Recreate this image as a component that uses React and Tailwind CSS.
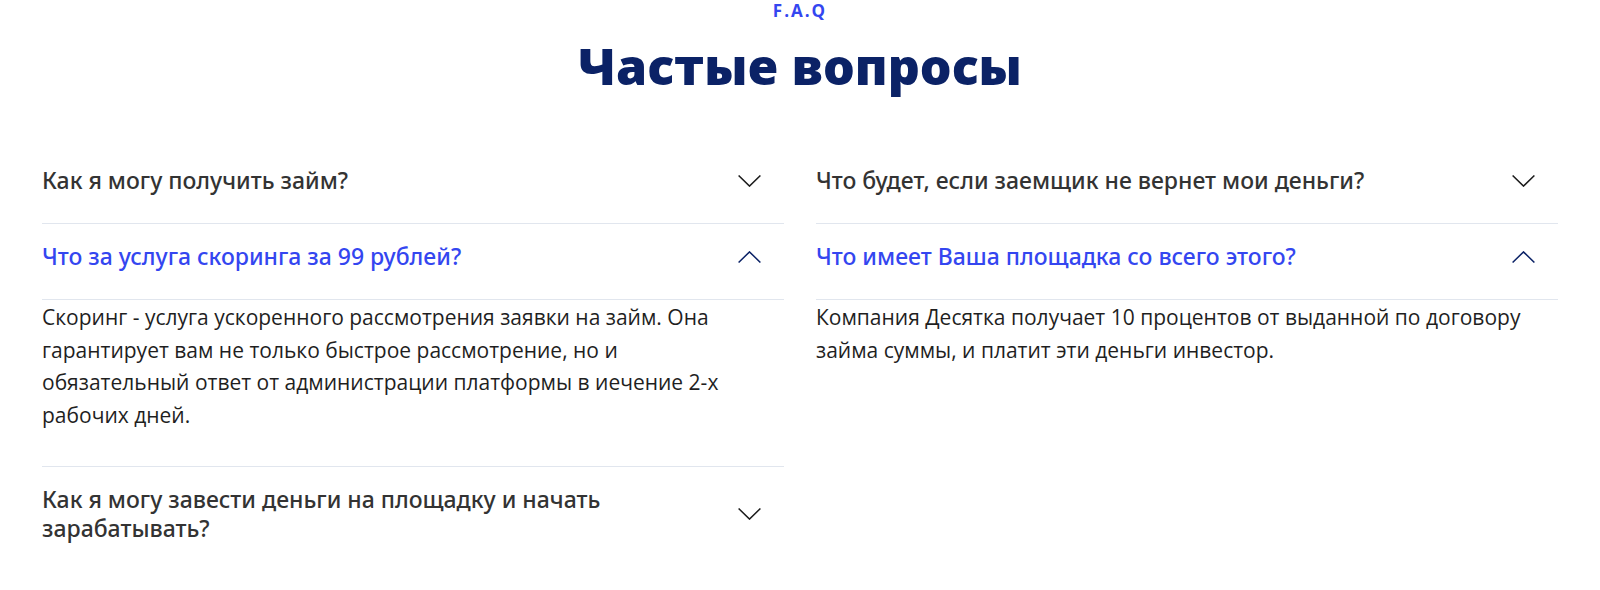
import { useState } from "react";

const leftItems = [
  { q: "Как я могу получить займ?", a: "" },
  {
    q: "Что за услуга скоринга за 99 рублей?",
    a: "Скоринг - услуга ускоренного рассмотрения заявки на займ. Она гарантирует вам не только быстрое рассмотрение, но и обязательный ответ от администрации платформы в иечение 2-х рабочих дней.",
  },
  { q: "Как я могу завести деньги на площадку и начать зарабатывать?", a: "" },
];

const rightItems = [
  { q: "Что будет, если заемщик не вернет мои деньги?", a: "" },
  {
    q: "Что имеет Ваша площадка со всего этого?",
    a: "Компания Десятка получает 10 процентов от выданной по договору займа суммы, и платит эти деньги инвестор.",
  },
];

const Chevron = ({ open }) => (
  <svg
    width="23"
    height="12"
    viewBox="0 0 23 12"
    fill="none"
    className={open ? "text-[#0b2266]" : "text-[#1c1c1c]"}
  >
    <path
      d={open ? "M0.6 11.5L11.5 0.9L22.4 11.5" : "M0.6 0.5L11.5 11.1L22.4 0.5"}
      stroke="currentColor"
      strokeWidth="1.5"
    />
  </svg>
);

const FaqItem = ({ item, open, last, onToggle }) => {
  const hasAnswer = open && item.a;
  // the last item of a column has no closing divider
  const headBorder = last && !hasAnswer ? "" : "border-b border-[#e1e6ee]";
  return (
    <div>
      <button
        type="button"
        onClick={onToggle}
        className={`w-full flex items-center justify-between gap-10 pt-[18px] pb-[28px] text-left cursor-pointer ${headBorder}`}
      >
        <span
          className={`text-[23px] leading-[29px] font-medium ${
            open ? "text-[#3446f0]" : "text-[#333333]"
          }`}
        >
          {item.q}
        </span>
        <span className="shrink-0 mr-[23px]">
          <Chevron open={open} />
        </span>
      </button>
      {hasAnswer && (
        <div
          className={`pt-[1px] pb-[34px] pr-[24px] text-[21px] leading-[32.7px] text-[#1f1f1f] font-['Open_Sans',sans-serif] ${
            last ? "" : "border-b border-[#e1e6ee]"
          }`}
        >
          {item.a}
        </div>
      )}
    </div>
  );
};

const FaqColumn = ({ items, initial }) => {
  const [open, setOpen] = useState(initial);
  return (
    <div className="flex flex-col">
      {items.map((item, i) => (
        <FaqItem
          key={i}
          item={item}
          open={open === i}
          last={i === items.length - 1}
          onToggle={() => setOpen(open === i ? -1 : i)}
        />
      ))}
    </div>
  );
};

export default function App() {
  return (
    <div className="min-h-screen bg-white font-['Noto_Sans',sans-serif]">
      <section className="w-[1516px] mx-auto">
        <div className="flex flex-col items-center">
          <span className="text-[17px] leading-[22px] font-bold tracking-[2px] text-[#3446f0] font-['Open_Sans',sans-serif]">
            F.A.Q
          </span>
          <h2 className="mt-[15px] text-[50px] leading-[58px] font-extrabold text-[#0b2266] font-['Open_Sans',sans-serif]">
            Частые вопросы
          </h2>
        </div>
        <div className="mt-[53px] grid grid-cols-2 gap-8">
          <FaqColumn items={leftItems} initial={1} />
          <FaqColumn items={rightItems} initial={1} />
        </div>
      </section>
    </div>
  );
}
